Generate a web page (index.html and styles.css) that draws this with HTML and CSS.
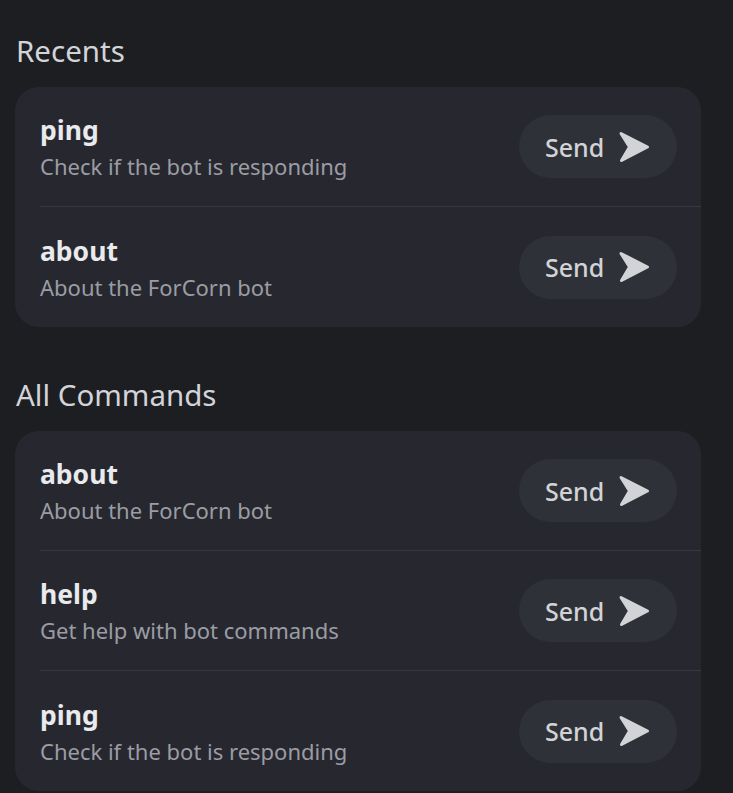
FILE: index.html
```html
<!DOCTYPE html>
<html lang="en">
<head>
<meta charset="utf-8">
<title>Commands</title>
<link rel="stylesheet" href="styles.css">
</head>
<body>
<main class="page">
  <section class="section">
    <h2 class="section-title">Recents</h2>
    <div class="card">
      <div class="row">
        <div class="info">
          <div class="name">ping</div>
          <div class="desc">Check if the bot is responding</div>
        </div>
        <button class="send">Send
          <svg class="send-icon" viewBox="0 0 32 32" width="32" height="32"><path d="M3 2.5 L29.5 16 L3.5 29.5 L11.5 16 Z"/></svg>
        </button>
      </div>
      <div class="row">
        <div class="info">
          <div class="name">about</div>
          <div class="desc">About the ForCorn bot</div>
        </div>
        <button class="send">Send
          <svg class="send-icon" viewBox="0 0 32 32" width="32" height="32"><path d="M3 2.5 L29.5 16 L3.5 29.5 L11.5 16 Z"/></svg>
        </button>
      </div>
    </div>
  </section>
  <section class="section">
    <h2 class="section-title">All Commands</h2>
    <div class="card">
      <div class="row">
        <div class="info">
          <div class="name">about</div>
          <div class="desc">About the ForCorn bot</div>
        </div>
        <button class="send">Send
          <svg class="send-icon" viewBox="0 0 32 32" width="32" height="32"><path d="M3 2.5 L29.5 16 L3.5 29.5 L11.5 16 Z"/></svg>
        </button>
      </div>
      <div class="row">
        <div class="info">
          <div class="name">help</div>
          <div class="desc">Get help with bot commands</div>
        </div>
        <button class="send">Send
          <svg class="send-icon" viewBox="0 0 32 32" width="32" height="32"><path d="M3 2.5 L29.5 16 L3.5 29.5 L11.5 16 Z"/></svg>
        </button>
      </div>
      <div class="row">
        <div class="info">
          <div class="name">ping</div>
          <div class="desc">Check if the bot is responding</div>
        </div>
        <button class="send">Send
          <svg class="send-icon" viewBox="0 0 32 32" width="32" height="32"><path d="M3 2.5 L29.5 16 L3.5 29.5 L11.5 16 Z"/></svg>
        </button>
      </div>
    </div>
  </section>
</main>
</body>
</html>
```

FILE: styles.css
```css
html, body {
  margin: 0;
  padding: 0;
  background: #1d1e22;
}

body {
  font-family: "Noto Sans", "Open Sans", sans-serif;
  color: #e6e7ea;
  overflow: hidden;
}

.page {
  padding: 33px 32px 0 15px;
}

.section + .section {
  margin-top: 50px;
}

.section-title {
  margin: 0 0 18px 1px;
  font-size: 29.5px;
  line-height: 36px;
  font-weight: 400;
  color: #d3d4d9;
}

.card {
  background: #27282f;
  border-radius: 24px;
  overflow: hidden;
}

.row {
  display: flex;
  align-items: center;
  justify-content: space-between;
  height: 120px;
  box-sizing: border-box;
  margin-left: 25px;
  padding-right: 24px;
  border-bottom: 1px solid #383940;
}

.row:last-child {
  border-bottom: none;
}

.info {
  display: flex;
  flex-direction: column;
  gap: 6px;
  padding-top: 1px;
}

.name {
  font-size: 26.5px;
  line-height: 32px;
  font-weight: 700;
  color: #e9eaed;
}

.desc {
  font-size: 22px;
  line-height: 28px;
  color: #9b9ca4;
}

.send {
  display: flex;
  align-items: center;
  gap: 14px;
  width: 158px;
  height: 63px;
  padding: 0 0 0 26px;
  box-sizing: border-box;
  border: none;
  border-radius: 32px;
  background: #2f3138;
  color: #d2d3d7;
  font-family: inherit;
  font-size: 25px;
  font-weight: 500;
}

.send-icon {
  fill: #d2d3d7;
  stroke: #d2d3d7;
  stroke-width: 3;
  stroke-linejoin: round;
}
```
